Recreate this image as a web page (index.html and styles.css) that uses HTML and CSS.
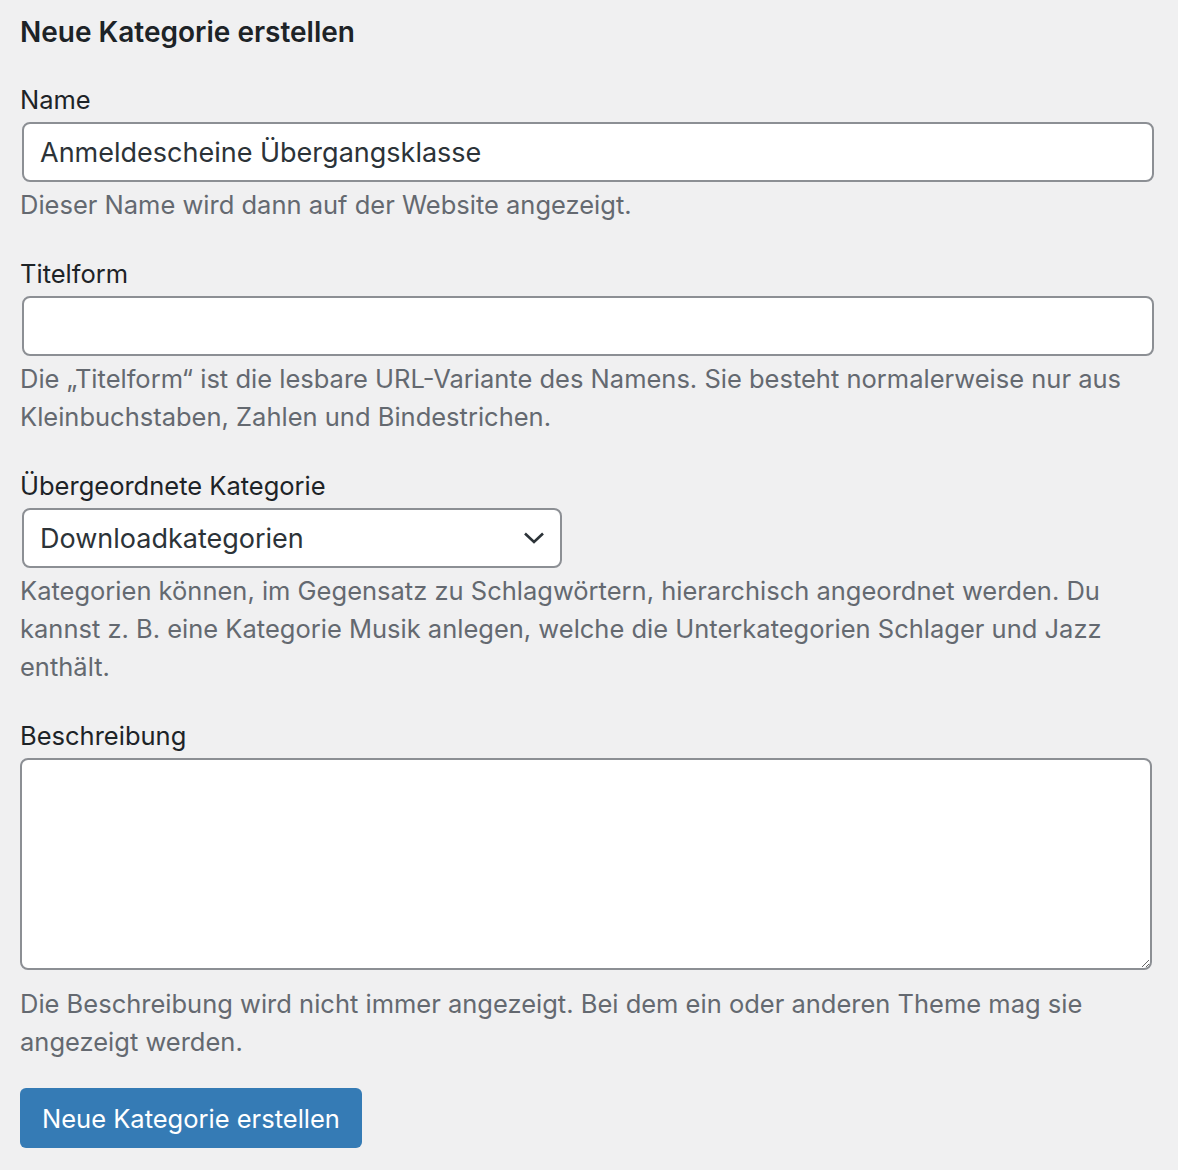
FILE: index.html
```html
<!DOCTYPE html>
<html lang="de">
<head>
<meta charset="utf-8">
<title>Neue Kategorie erstellen</title>
<link rel="stylesheet" href="styles.css">
</head>
<body>
<form class="form-wrap">
  <h2 class="title">Neue Kategorie erstellen</h2>

  <div class="field">
    <label class="label" for="tag-name">Name</label>
    <input class="text-input" id="tag-name" type="text" value="Anmeldescheine Übergangsklasse">
    <p class="desc">Dieser Name wird dann auf der Website angezeigt.</p>
  </div>

  <div class="field">
    <label class="label" for="tag-slug">Titelform</label>
    <input class="text-input" id="tag-slug" type="text" value="">
    <p class="desc">Die „Titelform“ ist die lesbare URL-Variante des Namens. Sie besteht normalerweise nur aus Kleinbuchstaben, Zahlen und Bindestrichen.</p>
  </div>

  <div class="field">
    <label class="label" for="parent">Übergeordnete Kategorie</label>
    <div class="select">
      <span class="select-value">Downloadkategorien</span>
      <svg class="chevron" width="24" height="24" viewBox="0 0 24 24"><path d="M3 7.5 L12 16 L21 7.5" fill="none" stroke="#2c3338" stroke-width="2.6"/></svg>
    </div>
    <p class="desc">Kategorien können, im Gegensatz zu Schlagwörtern, hierarchisch angeordnet werden. Du kannst z. B. eine Kategorie Musik anlegen, welche die Unterkategorien Schlager und Jazz enthält.</p>
  </div>

  <div class="field">
    <label class="label" for="tag-description">Beschreibung</label>
    <textarea class="textarea" id="tag-description"></textarea>
    <p class="desc desc-after-area">Die Beschreibung wird nicht immer angezeigt. Bei dem ein oder anderen Theme mag sie angezeigt werden.</p>
  </div>

  <button class="button" type="button">Neue Kategorie erstellen</button>
</form>
</body>
</html>
```

FILE: styles.css
```css
html, body {
  margin: 0;
  padding: 0;
  background: #f0f0f1;
}

body {
  font-family: Inter, "Noto Sans", "Liberation Sans", sans-serif;
  color: #1d2327;
  width: 1178px;
  height: 1170px;
  overflow: hidden;
}

.form-wrap {
  padding: 0 20px;
  display: flex;
  flex-direction: column;
  align-items: flex-start;
}

.title {
  margin: 15px 0 0;
  font-size: 28px;
  line-height: 34px;
  font-weight: 600;
  color: #1d2327;
}

.field {
  width: 100%;
  display: flex;
  flex-direction: column;
  align-items: flex-start;
  margin-top: 32px;
}

.field:first-of-type {
  margin-top: 33px;
}

.label {
  font-size: 25.5px;
  line-height: 36px;
  margin-bottom: 4px;
  color: #1d2327;
}

.text-input {
  box-sizing: border-box;
  margin: 0 0 0 2px;
  width: 1132px;
  height: 60px;
  border: 2px solid #8c8f94;
  border-radius: 8px;
  background: #fff;
  padding: 0 16px;
  font-family: inherit;
  font-size: 27px;
  color: #2c3338;
  outline: none;
}

.select {
  box-sizing: border-box;
  margin-left: 2px;
  width: 540px;
  height: 60px;
  border: 2px solid #8c8f94;
  border-radius: 8px;
  background: #fff;
  padding: 0 14px 0 16px;
  display: flex;
  align-items: center;
  justify-content: space-between;
  font-size: 27px;
  color: #2c3338;
}

.chevron {
  display: block;
}

.textarea {
  box-sizing: border-box;
  display: block;
  width: 1132px;
  height: 212px;
  margin: 0;
  border: 2px solid #8c8f94;
  border-radius: 8px;
  background: #fff;
  resize: vertical;
  font-family: inherit;
  font-size: 26px;
  outline: none;
}

.desc {
  margin: 4px 0 0;
  font-size: 25.5px;
  line-height: 38px;
  color: #646970;
}

.desc-after-area {
  margin-top: 15px;
}

.button {
  margin-top: 27px;
  height: 60px;
  padding: 0 22px;
  border: none;
  border-radius: 6px;
  background: #357bb5;
  color: #fff;
  font-family: inherit;
  font-size: 25.5px;
  cursor: pointer;
}
```
